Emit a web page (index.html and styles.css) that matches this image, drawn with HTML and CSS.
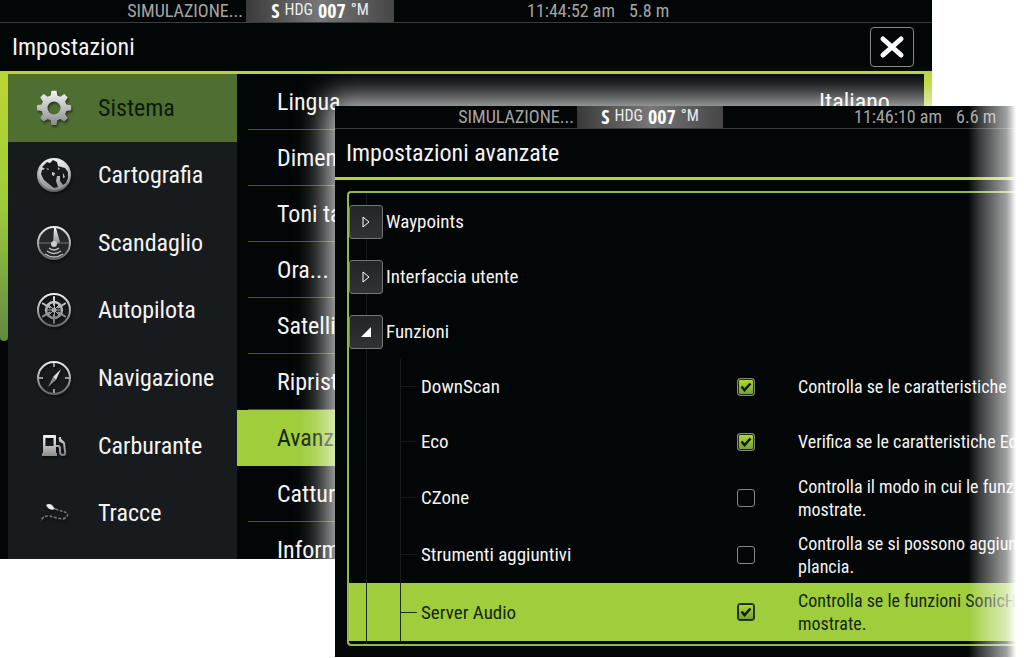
FILE: index.html
```html
<!DOCTYPE html>
<html lang="it">
<head>
<meta charset="utf-8">
<title>Impostazioni</title>
<link rel="stylesheet" href="styles.css">
</head>
<body>
<svg width="0" height="0" class="defs" aria-hidden="true">
  <defs>
    <linearGradient id="metal" x1="0" y1="0" x2="0" y2="1"><stop offset="0" stop-color="#f4f4f4"/><stop offset="1" stop-color="#8b8b8b"/></linearGradient>
    <linearGradient id="ring" gradientUnits="userSpaceOnUse" x1="0" y1="1" x2="0" y2="35"><stop offset="0" stop-color="#f2f2f2"/><stop offset="1" stop-color="#606163"/></linearGradient>
  </defs>
</svg>
<main class="desktop">
  <section class="window window-back">
    <div class="status">
      <span class="sim">SIMULAZIONE...</span>
      <span class="heading"><b>S</b> <small>HDG</small> <b>007</b> <small>°M</small></span>
      <span class="clock">11:44:52 am</span><span class="depth">5.8 m</span>
    </div>
    <header class="titlebar">
      <h1>Impostazioni</h1>
      <button class="close" aria-label="Chiudi"><svg width="26" height="24" viewBox="0 0 26 24"><path d="M4 4 22 20M22 4 4 20" stroke="#fff" stroke-width="5" stroke-linecap="round"/></svg></button>
    </header>
    <div class="settings">
      <div class="scroll"><div class="thumb"></div></div>
      <nav class="sections">
        <a href="#" class="active"><svg class="icon" viewBox="0 0 36 36"><path fill="url(#metal)" fill-rule="evenodd" d="M15.500 0.700h5l.8 4.700 3.100 1.300 3.900-2.700 3.500 3.500-2.700 3.900 1.300 3.100 4.700.800v5l-4.700.800-1.300 3.100 2.700 3.900-3.500 3.500-3.900-2.700-3.100 1.300-.8 4.700h-5l-.8-4.700-3.100-1.300-3.900 2.700-3.500-3.500 2.700-3.900-1.300-3.100-4.700-.8v-5l4.700-.8 1.300-3.100-2.700-3.900 3.500-3.500 3.900 2.700 3.100-1.300zM18 11.500a6.500 6.500 0 1 0 0 13 6.500 6.500 0 0 0 0-13z"/></svg><span>Sistema</span></a>
        <a href="#"><svg class="icon" viewBox="0 0 36 36"><circle cx="18" cy="18" r="16" fill="url(#metal)" stroke="url(#ring)" stroke-width="2"/><path fill="#181b1d" d="M6 10l5-5 3 1 3-3 4 2 1 4 3 1 4 1 3 4 0 6-2 5-3 2-3-4 0-5-3 0-1 5 2 6-4 1-5-4-5-4-3-6 1-4 3-1z"/><path fill="#ccc" d="M16 15l3 1-1 3-2-1zM10 11l3 1-1 1zM22 10l2 2-2 1zM27 16l2 4-2 1z"/></svg><span>Cartografia</span></a>
        <a href="#"><svg class="icon" viewBox="0 0 36 36"><circle cx="18" cy="18" r="16" fill="#25282a" stroke="url(#ring)" stroke-width="2"/><path fill="url(#metal)" d="M18 3h2l4 14-4 2h-3z"/><path d="M3 18h30" stroke="#777" stroke-width="1"/><circle cx="18" cy="19" r="3" fill="#ccc"/><g fill="none" stroke="#bbb" stroke-width="1.500"><path d="M13 23q5 4 10 0"/><path d="M11 26q7 5 14 0"/><path d="M9 29q9 6 18 0"/></g></svg><span>Scandaglio</span></a>
        <a href="#"><svg class="icon" viewBox="0 0 36 36"><g fill="none" stroke="url(#ring)"><circle cx="18" cy="18" r="16" stroke-width="2"/><circle cx="18" cy="18" r="8" stroke-width="2.500"/><path stroke-width="2" stroke-linecap="round" d="M18 5v8M18 23v8M6.800 11.500l6.900 4M22.300 20.500l6.900 4M6.800 24.500l6.900-4M22.300 15.500l6.900-4"/><path d="M12 12l12 12M12 24l12-12M10 18h16M18.500 10v16"/></g><circle cx="18" cy="18" r="2.500" fill="#aaa"/></svg><span>Autopilota</span></a>
        <a href="#"><svg class="icon" viewBox="0 0 36 36"><circle cx="18" cy="18" r="16" fill="none" stroke="url(#ring)" stroke-width="2"/><path d="M18 3v4M18 29v4M3 18h4M29 18h4" stroke="#999" stroke-width="2"/><path fill="#ddd" d="M25 9l-5 11-3-3z"/><path fill="#8b8b8b" d="M12 27l5-10 3 3z"/></svg><span>Navigazione</span></a>
        <a href="#"><svg class="icon" viewBox="0 0 36 36"><path fill="url(#metal)" fill-rule="evenodd" d="M8 7h11q1 0 1 1v17h1v3H6v-3h1V8q0-1 1-1zM9.500 10v8h8v-8z"/><path fill="none" stroke="url(#ring)" stroke-width="2" d="M20 18h2q2 0 2 3v3q0 3 3 3t2-4l-1-8-5-5M24 9v4l4 2"/></svg><span>Carburante</span></a>
        <a href="#"><svg class="icon" viewBox="0 0 36 36"><path fill="#ececec" d="M10 10q3-2 6 0l3 4q-4 2-7-1z"/><path fill="none" stroke="#74787b" stroke-width="1.500" stroke-dasharray="3 1.500" d="M19 14q6 2 10 3 6 4-2 7-8-1-13-3-8 0-9 5"/></svg><span>Tracce</span></a>
      </nav>
      <ul class="options">
        <li><a href="#">Lingua<span class="value">Italiano</span></a></li>
        <li><a href="#">Dimen</a></li>
        <li><a href="#">Toni ta</a></li>
        <li><a href="#">Ora...</a></li>
        <li><a href="#">Satelli</a></li>
        <li><a href="#">Riprist</a></li>
        <li class="active"><a href="#">Avanza</a></li>
        <li><a href="#">Cattur</a></li>
        <li><a href="#">Inform</a></li>
      </ul>
      <div class="scroll"><div class="thumb"></div></div>
    </div>
  </section>

  <section class="window window-front">
    <div class="status">
      <span class="sim">SIMULAZIONE...</span>
      <span class="heading"><b>S</b> <small>HDG</small> <b>007</b> <small>°M</small></span>
      <span class="clock">11:46:10 am</span><span class="depth">6.6 m</span>
    </div>
    <header class="titlebar"><h2>Impostazioni avanzate</h2></header>
    <div class="tree">
      <div class="group"><button aria-label="Espandi Waypoints"><svg width="10" height="14" viewBox="0 0 10 14"><path d="M2 2v10l6-5z" fill="none" stroke="#fff"/></svg></button><span>Waypoints</span></div>
      <div class="group"><button aria-label="Espandi Interfaccia utente"><svg width="10" height="14" viewBox="0 0 10 14"><path d="M2 2v10l6-5z" fill="none" stroke="#fff"/></svg></button><span>Interfaccia utente</span></div>
      <div class="group"><button aria-label="Comprimi Funzioni"><svg width="10" height="10" viewBox="0 0 10 10"><path d="M10 0v10H0z" fill="#fff"/></svg></button><span>Funzioni</span></div>
      <div class="leaf"><label for="downscan">DownScan</label><input type="checkbox" id="downscan" checked><p>Controlla se le caratteristiche</p></div>
      <div class="leaf"><label for="eco">Eco</label><input type="checkbox" id="eco" checked><p>Verifica se le caratteristiche Ec</p></div>
      <div class="leaf tall"><label for="czone">CZone</label><input type="checkbox" id="czone"><p>Controlla il modo in cui le funz<br>mostrate.</p></div>
      <div class="leaf tall"><label for="strumenti">Strumenti aggiuntivi</label><input type="checkbox" id="strumenti"><p>Controlla se si possono aggiun<br>plancia.</p></div>
      <div class="leaf tall active"><label for="audio">Server Audio</label><input type="checkbox" id="audio" checked><p>Controlla se le funzioni SonicH<br>mostrate.</p></div>
    </div>
    <div class="fade"></div>
  </section>
</main>
</body>
</html>
```
FILE: styles.css
```css
* { box-sizing: border-box; }
body {
  margin: 0;
  background: #fff;
  color: #f4f4f2;
  font-family: "Roboto Condensed", "Open Sans Condensed", "Open Sans", sans-serif;
}
h1, h2, p, ul { margin: 0; padding: 0; font-weight: 400; }
a { color: inherit; text-decoration: none; }
button { font: inherit; color: inherit; padding: 0; }
.defs { position: absolute; }
.desktop { position: relative; min-height: 658px; overflow: hidden; }

.window { position: absolute; background: #030607; overflow: hidden; white-space: nowrap; }
.window-back { left: 0; top: 0; width: 91%; }
.window-front {
  left: 335px; right: 8px; top: 106px;
  padding-bottom: 11px;
  box-shadow: 0 0 28px 8px rgba(255, 255, 255, .8);
}

.status {
  display: flex;
  align-items: center;
  height: 23px;
  border-bottom: 1px solid #3b3e3f;
  color: #a5a5a3;
  font-size: 18px;
  line-height: 22px;
}
.sim { width: 246px; padding-right: 3px; text-align: right; }
.heading {
  display: flex;
  justify-content: center;
  gap: 5px;
  width: 148px;
  background: linear-gradient(90deg, #3a3a3b, #777 50%, #464647);
  color: #fff;
}
.heading b { font-family: "Open Sans Condensed", sans-serif; font-size: 20px; }
.heading small { font-size: 16px; line-height: 20px; color: #ececec; }
.clock { margin-left: 133px; }
.depth { margin-left: 14px; }
.window-front .sim { width: 242px; }
.window-front .heading { width: 146px; }
.window-front .clock { margin-left: 131px; }

.titlebar {
  display: flex;
  align-items: center;
  justify-content: space-between;
  height: 51px;
  padding: 0 18px 0 12px;
  border-bottom: 3px solid #b9d338;
}
.titlebar h1, .titlebar h2 { font-size: 24px; line-height: 32px; }
.close {
  display: grid;
  place-items: center;
  width: 44px; height: 40px;
  border: 1px solid #85888a;
  border-radius: 4px;
  background: #030607;
}

.settings { display: flex; height: 485px; font-size: 24px; line-height: 32px; }
.scroll { width: 8px; }
.thumb { height: 267px; border-radius: 0 0 4px 4px; background: linear-gradient(#bcd534, #9ccb3b 50%, #5f8843); }
.sections {
  display: grid;
  grid-template-rows: repeat(7, 1fr);
  width: 229px;
  padding-bottom: 12px;
  background: #181b1e;
}
.sections a { display: flex; align-items: center; gap: 26px; padding-left: 28px; }
.sections .active { background: #4f6e31; color: #0a1c04; }
.icon { width: 36px; height: 36px; filter: drop-shadow(1px 2px 1px rgba(0, 0, 0, .5)); }
.options { flex: 1; list-style: none; overflow: hidden; }
.options li { height: 56px; padding-left: 11px; }
.options a {
  display: flex;
  align-items: center;
  justify-content: space-between;
  height: 56px;
  padding: 0 34px 0 29px;
  border-bottom: 1px solid #47571f;
}
.options .active { background: #9fcd3b; color: #14260c; }
.options .active a { border-bottom: 0; }

.window-front .titlebar { padding-left: 11px; }
.tree {
  margin: 11px 0 0 12px;
  padding: 1px 0 3px;
  border: 2px solid #93b84c;
  border-right: 0;
  border-radius: 4px 0 0 4px;
  font-size: 19px;
  line-height: 23px;
  background: linear-gradient(#171b1c, #171b1c) 17px 0 / 1px 100% no-repeat;
}
.group { display: flex; align-items: center; gap: 3px; height: 55px; }
.group button {
  display: grid;
  place-items: center;
  width: 34px; height: 34px;
  border: 1px solid #75787a;
  border-radius: 3px;
  background: linear-gradient(#232527, #303234);
}
.leaf {
  --line: #171b1c;
  display: grid;
  grid-template-columns: 316px 61px 1fr;
  align-items: center;
  height: 55px;
  padding-left: 72px;
  background:
    linear-gradient(var(--line), var(--line)) 51px 0 / 1px 100% no-repeat,
    linear-gradient(var(--line), var(--line)) 51px 50% / 17px 1px no-repeat,
    linear-gradient(var(--line), var(--line)) 17px 0 / 1px 100% no-repeat;
}
.leaf p { font-size: 18px; }
.tall { height: 57px; }
.leaf.active { --line: #1c3010; height: 58px; background-color: #9fcd3b; color: #14260c; }
.leaf input {
  appearance: none;
  width: 18px; height: 18px;
  margin: 0;
  border: 1px solid #85888a;
  border-radius: 3px;
}
.leaf input:checked {
  background: url("data:image/svg+xml,%3Csvg xmlns='http://www.w3.org/2000/svg' viewBox='0 0 16 16'%3E%3Cpath d='M3.5 7.500l3 3.500 6-6.500' fill='none' stroke='%230d1a06' stroke-width='2.500'/%3E%3C/svg%3E") center / 16px 16px,
    linear-gradient(#b5dc2c, #6f9d3d);
  box-shadow: inset 0 0 0 1px #1d2b10;
}
.leaf.active input { border-color: #26391a; }

.fade {
  position: absolute;
  top: 0; right: 0; bottom: 0;
  width: 48px;
  background: linear-gradient(90deg, rgba(255, 255, 255, 0), rgba(255, 255, 255, .22) 25%, rgba(255, 255, 255, .62) 80%, #fff);
  pointer-events: none;
}
```
